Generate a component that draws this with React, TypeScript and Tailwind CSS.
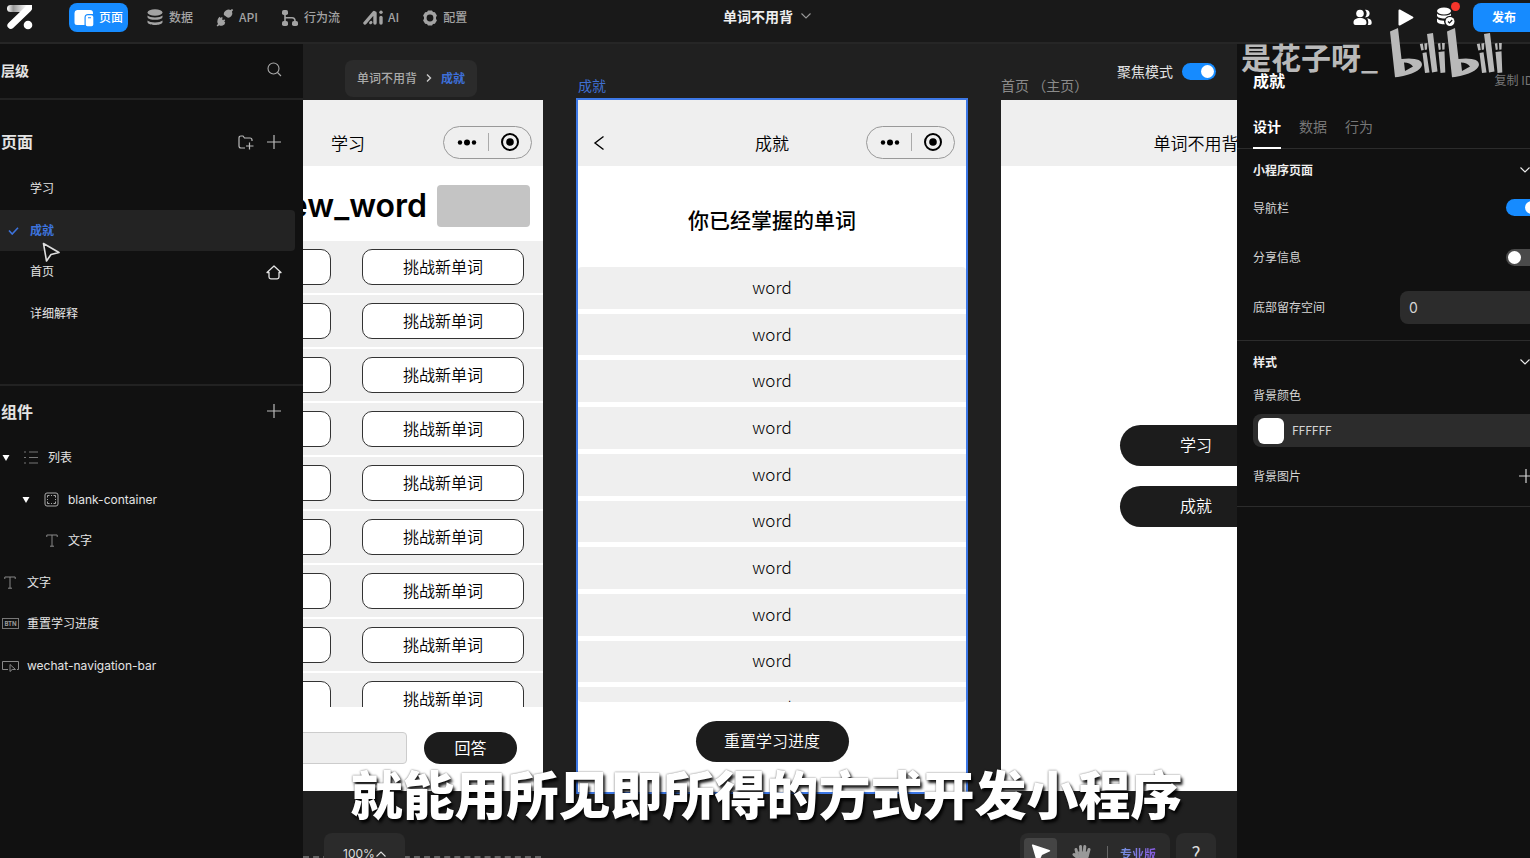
import React from "react";

const cjk = "font-['Noto_Sans_CJK_SC',sans-serif]";

function Switch({ id, on }: { id: string; on: boolean }) {
  return (
    <span className="relative inline-flex h-[17px] w-[34px] shrink-0">
      <input id={id} type="checkbox" role="switch" defaultChecked={on} className="peer h-full w-full appearance-none rounded-full bg-[#4a4a4a] checked:bg-[#168bff]" />
      <span className="pointer-events-none absolute left-[2px] top-[2px] size-[13px] rounded-full bg-white peer-checked:left-[19px]" />
    </span>
  );
}

function Plus() {
  return (
    <svg width="14" height="14" viewBox="0 0 14 14" stroke="currentColor" strokeWidth="1.2" fill="none" aria-hidden="true">
      <path d="M7 0v14M0 7h14" />
    </svg>
  );
}

function Chevron() {
  return (
    <svg width="10" height="6" viewBox="0 0 10 6" fill="none" stroke="currentColor" strokeWidth="1.1" aria-hidden="true">
      <path d="M.5.5 5 5 9.5.5" />
    </svg>
  );
}

function Caret() {
  return (
    <svg width="8" height="6" viewBox="0 0 8 6" fill="white" aria-hidden="true">
      <path d="M.5 0h7L4 6z" />
    </svg>
  );
}

const navIcons = {
  page: (
    <svg width="20" height="18" viewBox="0 0 20 18" fill="white">
      <path d="M3 1h13a3 3 0 0 1 3 3v1h-5a3.500 3.500 0 0 0-3.500 3.500V16H3a2.500 2.500 0 0 1-2.500-2.500V4A3 3 0 0 1 3 1z" />
      <path fillRule="evenodd" d="M13.500 6.200h4a1.800 1.800 0 0 1 1.800 1.800v7.500a1.800 1.800 0 0 1-1.800 1.800h-4a1.800 1.800 0 0 1-1.800-1.800V8a1.800 1.800 0 0 1 1.800-1.800zM14 8.300v1h3v-1z" />
    </svg>
  ),
  data: (
    <svg width="17" height="17" viewBox="0 0 17 17" fill="currentColor">
      <ellipse cx="8" cy="3.500" rx="7.500" ry="3.200" />
      <path d="M.5 6.500c2.500 2.600 12.500 2.600 15 0v1.700c-1 3.500-14 3.500-15 0zM.5 11.500c2.500 2.600 12.500 2.600 15 0v1.700c-1 3.700-14 3.700-15 0z" />
    </svg>
  ),
  api: (
    <svg width="18" height="18" viewBox="0 0 18 18" fill="currentColor">
      <path d="M7.900 6q-.6-3 2-4.600 2.500-1.400 4.700-.4L16 0l1.200 1.100-1.200 1.300q1 2.600-.6 4.600-1.700 2.200-4 1.600z" />
      <path d="m3.600 7.800 1.200 1.200 1-1 1.100 1-1 1.100 1.200 1.200 1-1 1.100 1-1 1.100 1 1q-.3 2.400-2.500 3.200-2 .6-3.600-.4L1.700 17.500.6 16.400 2 14.900q-1.200-2-.4-4.200.7-2 2-2.900z" />
    </svg>
  ),
  flow: (
    <svg width="18" height="18" viewBox="0 0 18 18" fill="currentColor">
      <rect x="1" y="1" width="6" height="5" rx="1.800" />
      <rect x="1" y="12" width="6" height="5" rx="1.800" />
      <rect x="11" y="12" width="6" height="5" rx="1.800" />
      <path d="M4 5v8M4 8.800h7q3 0 3 3v1" fill="none" stroke="currentColor" strokeWidth="1.600" />
    </svg>
  ),
  ai: (
    <svg width="20" height="15" viewBox="0 0 20 15" fill="none" stroke="currentColor" strokeWidth="3.400" strokeLinecap="round">
      <path d="M2 13 11 2.500M12 3v10" />
      <path d="m7.500 12.800.6-.5" strokeWidth="2.800" />
      <path d="M18 7.500V13" />
      <path d="M18 2.200v.1" />
    </svg>
  ),
  config: (
    <svg width="16" height="16" viewBox="0 0 16 16" fill="currentColor">
      <path fillRule="evenodd" d="M6 .5h4l1 1.600 1.900.1 2 3.400-.9 1.600v1.600l.9 1.600-2 3.400-1.900.1-1 1.600H6l-1-1.600-1.900-.1-2-3.400.9-1.600V7.200l-.9-1.600 2-3.400L5 2.100zM8 4.600a3.400 3.400 0 1 0 0 6.800 3.400 3.400 0 0 0 0-6.800z" />
    </svg>
  ),
};

const nav: { icon: React.ReactNode; label: string; active?: boolean }[] = [
  { icon: navIcons.page, label: "页面", active: true },
  { icon: navIcons.data, label: "数据" },
  { icon: navIcons.api, label: "API" },
  { icon: navIcons.flow, label: "行为流" },
  { icon: navIcons.ai, label: "AI" },
  { icon: navIcons.config, label: "配置" },
];

function Header() {
  return (
    <header className="relative flex h-11 shrink-0 items-start justify-between border-b-2 border-[#262626] bg-[#191919]">
      <div className="flex pt-[3px]">
        <svg className="ml-[7px] mt-[1px] shrink-0" width="26" height="26" viewBox="0 0 26 26" aria-label="Logo">
          <defs>
            <linearGradient id="logo" x1="0" x2="1">
              <stop offset="0" stopColor="#fff" />
              <stop offset=".25" stopColor="#999" />
              <stop offset=".8" stopColor="#fff" />
            </linearGradient>
          </defs>
          <path d="M3.500 1H25v3.500L21 8H3.500a3.500 3.500 0 0 1 0-7z" fill="url(#logo)" />
          <path d="M21.500 4.500 3.800 21.500" stroke="white" strokeWidth="6.800" strokeLinecap="round" />
          <circle cx="21" cy="21" r="4.300" fill="white" />
        </svg>
        <nav className="ml-9 flex gap-[3px] text-[12px] font-medium text-[#a3a3a3]">
          {nav.map((n) => (
            <a key={n.label} href="#" className={n.active ? "mr-[6px] flex h-[29px] items-center gap-[5px] rounded-lg bg-[#168bff] px-[5px] text-white" : "flex h-[29px] items-center gap-[5px] px-[10px]"}>
              {n.icon}
              <span className="pb-[2px]">{n.label}</span>
            </a>
          ))}
        </nav>
      </div>
      <button className="absolute left-1/2 top-[6px] flex -translate-x-1/2 items-center gap-2 pl-1 text-[14px] leading-5 font-bold text-[#eee]">
        单词不用背
        <span className="text-[#999]"><Chevron /></span>
      </button>
      <div className="flex items-start pt-[3px] text-white">
        <button aria-label="成员" className="mt-[6px]">
          <svg width="19" height="17" viewBox="0 0 19 17" fill="white">
            <circle cx="7" cy="4.500" r="3.800" />
            <path d="M12 .8a3.800 3.800 0 1 1 0 7.400 5 5 0 0 0 0-7.400zM.5 13.500c0-3 2.500-4.500 6.500-4.500s6.500 1.500 6.500 4.500c0 1.800-.8 2.500-2 2.500h-9c-1.200 0-2-.7-2-2.500zM14 9.300c3 .4 4.700 1.700 4.700 4.200 0 1.800-.8 2.500-2 2.500h-2c1-2 .7-5-.7-6.700z" />
          </svg>
        </button>
        <button aria-label="预览" className="ml-[26px] mt-[6px]">
          <svg width="16" height="17" viewBox="0 0 16 17" fill="white">
            <path d="M.5 1.500C.5.500 1.300.2 2 .6l13 7.200q1 .7 0 1.400l-13 7.200c-.7.400-1.500 0-1.500-1z" />
          </svg>
        </button>
        <button aria-label="数据库状态" className="relative ml-[22px] mt-1">
          <svg width="20" height="20" viewBox="0 0 20 20" fill="white">
            <ellipse cx="8" cy="4" rx="7" ry="3.500" />
            <path d="M1 6.500c2 2.700 12 2.700 14 0v2.300c-3 0-5 1.200-6 2.700-4 .2-7.500-1-8-2.800zM1 11.500c1.500 1.600 4 2.200 7 2.200 0 1.500.3 2.500 1 3.500-4 .3-8-.8-8-3z" />
            <circle cx="14" cy="14.500" r="4.500" />
            <path d="m12 14.500 1.500 1.500 2.700-3" fill="none" stroke="#191919" strokeWidth="1.200" />
          </svg>
          <span className="absolute -top-[5px] left-[15px] size-[9px] rounded-full bg-[#f5352b]" />
        </button>
        <button className="-mr-3 ml-[17px] h-[29px] w-[69px] rounded-lg bg-[#168bff] pr-[7px] pb-[2px] text-[12px] font-bold">发布</button>
      </div>
    </header>
  );
}

function TextIcon() {
  return (
    <svg width="12" height="13" viewBox="0 0 12 13" fill="none" stroke="currentColor" aria-hidden="true">
      <path d="M.8 3V1h10.400v2M6 1v11.200M4 12.200h4" />
    </svg>
  );
}

const pages = [{ name: "学习" }, { name: "成就", active: true }, { name: "首页", home: true }, { name: "详细解释" }];

function LeftPanel() {
  return (
    <aside className="relative z-10 flex w-[303px] shrink-0 flex-col bg-[#111] text-[12px] text-[#e4e4e4]">
      <div className="flex h-[56px] shrink-0 items-center justify-between border-b-2 border-[#222] pr-[21px] pl-[1px]">
        <h2 className="pb-[2px] text-[14px] font-bold">层级</h2>
        <button aria-label="搜索" className="-mt-1 text-[#aaa]">
          <svg width="15" height="15" viewBox="0 0 15 15" fill="none" stroke="currentColor" strokeWidth="1.100">
            <circle cx="6.500" cy="6.500" r="5.500" />
            <path d="m10.500 10.500 3.500 3.500" />
          </svg>
        </button>
      </div>
      <section className="h-[286px] shrink-0 border-b-2 border-[#222] pt-[26px]">
        <div className="flex h-8 items-center justify-between pr-[22px] pl-[1px]">
          <h2 className="pb-[2px] text-[16px] font-bold">页面</h2>
          <div className="flex items-center gap-[13px] text-[#bbb]">
            <button aria-label="新建文件夹">
              <svg width="16" height="15" viewBox="0 0 16 15" fill="none" stroke="currentColor" strokeWidth="1.200">
                <path d="M7 13H3q-2 0-2-2V3q0-2 2-2h2l1.500 2H12q2 0 2 2v1M11.500 7.500v7M8 11h7.500" />
              </svg>
            </button>
            <button aria-label="新建页面"><Plus /></button>
          </div>
        </div>
        <ul className="mt-[10px]">
          {pages.map((p) => (
            <li key={p.name} className="pr-2">
              <a href="#" className={p.active ? "flex h-[41px] items-center rounded-r-[4px] bg-[#232323] pr-[13px] font-bold text-[#3d73dc]" : "flex h-[42px] items-center pr-[13px]"}>
                <span className="flex w-[30px] pl-2">
                  {p.active && (
                    <svg width="11" height="8" viewBox="0 0 11 8" fill="none" stroke="#3d73dc" strokeWidth="1.600"><path d="M1 3.500 4.200 7 10 .8" /></svg>
                  )}
                </span>
                <span className="pb-[2px]">{p.name}</span>
                {p.home && (
                  <svg className="ml-auto" width="16" height="15" viewBox="0 0 16 15" fill="none" stroke="currentColor" strokeWidth="1.300" strokeLinejoin="round">
                    <path d="M1 7.500 8 1l7 6.500h-2V12q0 1.800-1.800 1.800H4.800Q3 13.800 3 12V7.500z" />
                  </svg>
                )}
              </a>
            </li>
          ))}
        </ul>
      </section>
      <section className="pt-[9px]">
        <div className="flex h-8 items-center justify-between pr-[22px] pl-[1px]">
          <h2 className="pb-[1px] text-[16px] font-bold">组件</h2>
          <button aria-label="添加组件" className="text-[#bbb]"><Plus /></button>
        </div>
        <ul className="mt-[10px] font-['Inter','Noto_Sans_CJK_SC',sans-serif] *:flex *:h-[41px] *:items-center">
          <li className="mb-[1px] pl-[2px]">
            <Caret />
            <svg className="mr-[9px] ml-[14px] text-[#777]" width="15" height="13" viewBox="0 0 15 13" stroke="currentColor" fill="none" aria-hidden="true">
              <path d="M0 1h2M5 1h9M0 6.500h2M5 6.500h9M0 12h2M5 12h9" />
            </svg>
            列表
          </li>
          <li className="pl-[22px]">
            <Caret />
            <svg className="mr-[9px] ml-[14px] text-[#aaa]" width="15" height="15" viewBox="0 0 15 15" stroke="currentColor" fill="none" aria-hidden="true">
              <rect x="1" y="1" width="13" height="13" rx="2" />
              <path d="M3.500 5.500v-2h2M9.500 3.500h2v2M11.500 9.500v2h-2M5.500 11.500h-2v-2M7 3.500h1M7 11.500h1M3.500 7v1M11.500 7v1" />
            </svg>
            blank-container
          </li>
          <li className="mb-[1px] pl-[46px]"><span className="mr-[10px] text-[#888]"><TextIcon /></span>文字</li>
          <li className="pl-[4px]"><span className="mr-[11px] text-[#888]"><TextIcon /></span>文字</li>
          <li className="mb-[1px] pl-[2px]">
            <span className="mr-2 flex h-[11px] w-[17px] items-center justify-center border border-[#777] text-[6px] leading-none font-bold text-[#999]">BTN</span>
            重置学习进度
          </li>
          <li className="pl-[2px]">
            <svg className="mr-2 text-[#888]" width="17" height="12" viewBox="0 0 17 12" stroke="currentColor" fill="none" aria-hidden="true">
              <path d="M6 9.500H.5v-8h16v8H15M8 4.500v7l2.200-2h3.300z" />
            </svg>
            wechat-navigation-bar
          </li>
        </ul>
      </section>
    </aside>
  );
}

function Capsule() {
  return (
    <div className="absolute top-[26px] right-[11px] flex h-[33px] w-[89px] items-center rounded-full border border-[#999]">
      <svg className="w-full" height="22" viewBox="0 0 87 22" aria-hidden="true">
        <circle cx="16" cy="10.500" r="2.200" />
        <circle cx="23" cy="10.500" r="3" />
        <circle cx="30" cy="10.500" r="2.200" />
        <path d="M44.500 1v18" stroke="#aaa" />
        <circle cx="66" cy="10" r="8" fill="none" stroke="#000" strokeWidth="2" />
        <circle cx="66" cy="10" r="3.800" />
      </svg>
    </div>
  );
}

function TitleBar({ title, back, capsule }: { title: string; back?: boolean; capsule?: boolean }) {
  return (
    <div className="relative flex h-[66px] shrink-0 items-center justify-center bg-[#efefef] pt-5 text-[17px] font-[350]">
      {back && (
        <svg className="absolute top-[35px] left-[15px]" width="12" height="16" viewBox="0 0 12 16" fill="none" stroke="#000" strokeWidth="1.400" aria-hidden="true">
          <path d="M10.500 1.500 2 8l8.500 6.500" />
        </svg>
      )}
      {title}
      {capsule && <Capsule />}
    </div>
  );
}

const pill = "h-[41px] w-[153px] rounded-full bg-[#1c1c1c] pb-[3px] text-[16px] font-[350] text-white";

function Canvas() {
  return (
    <main className="relative min-w-0 flex-1 overflow-hidden bg-[#202020] pt-[54px] text-black">
      <div className="-ml-[150px] flex w-max gap-[33px]">
        <article className="mt-[2px] flex h-[691px] w-[390px] flex-col bg-white">
          <TitleBar title="学习" capsule />
          <div className="flex h-[75px] shrink-0 items-center justify-end gap-[10px] pt-[4px] pr-[13px]">
            <span className="font-['Inter',sans-serif] text-[32px] font-semibold">new_word</span>
            <span className="h-[42px] w-[93px] rounded-[4px] bg-[#c4c4c4]" />
          </div>
          <div className="flex h-[466px] shrink-0 flex-col gap-[2px] overflow-hidden">
            {Array.from({ length: 9 }, (_, i) => (
              <div key={i} className="flex h-[52px] shrink-0 items-center gap-[31px] bg-[#efefef] pl-4 text-[16px] font-[350]">
                <button aria-label="复习单词" className="h-9 w-[162px] rounded-[10px] border border-[#333] bg-white" />
                <button className="h-9 w-[162px] rounded-[10px] border border-[#333] bg-white pb-[3px]">挑战新单词</button>
              </div>
            ))}
          </div>
          <div className="flex items-center gap-[17px] pt-[25px] pl-4">
            <input aria-label="答案" className="h-8 w-[238px] rounded-[4px] border border-[#ccc] bg-[#efefef]" />
            <button className="h-8 w-[93px] rounded-full bg-[#1c1c1c] pb-[2px] text-[16px] text-white">回答</button>
          </div>
        </article>
        <article className="relative flex h-[696px] w-[392px] flex-col border-2 border-[#3d78e6] bg-white">
          <TitleBar title="成就" back capsule />
          <h3 className="flex h-[101px] shrink-0 items-center justify-center pt-[7px] text-[21px] font-medium">你已经掌握的单词</h3>
          <div className="h-[435px] shrink-0 overflow-hidden rounded-[4px]">
            <ul className="grid h-[462px] grid-rows-10 gap-[5px] text-[17px] leading-5 font-light">
              {Array.from({ length: 10 }, (_, i) => (
                <li key={i} className="flex items-center justify-center bg-[#efefef] pb-[2px]">word</li>
              ))}
            </ul>
          </div>
          <button className={`mx-auto mt-[19px] ${pill}`}>重置学习进度</button>
        </article>
        <article className="mt-[2px] flex h-[691px] w-[390px] flex-col items-stretch bg-white">
          <TitleBar title="单词不用背" />
          <div className="flex flex-col items-center gap-5 pt-[259px]">
            <button className={pill}>学习</button>
            <button className={pill}>成就</button>
          </div>
        </article>
      </div>
      <span className="absolute top-[31px] left-[275px] text-[14px] leading-5 text-[#3f6fd0]">成就</span>
      <span className="absolute top-[31px] left-[698px] text-[14px] leading-5 text-[#8b8b8b]">首页 （主页）</span>
      <nav aria-label="路径" className="absolute top-[16px] left-[42px] flex h-[37px] items-center gap-[9px] rounded-lg bg-[#2b2b2b] px-3 pb-[1px] text-[12px] font-medium text-[#aaa]">
        <a href="#">单词不用背</a>
        <svg width="6" height="8" viewBox="0 0 6 8" fill="none" stroke="#ccc" strokeWidth="1.400"><path d="m1 .5 3.500 3.500L1 7.500" /></svg>
        <a href="#" className="font-bold text-[#3d6fd8]">成就</a>
      </nav>
      <label htmlFor="focus" className="absolute top-[17px] right-[21px] flex items-center gap-[9px] text-[14px] leading-5 text-[#e4e4e4]">
        聚焦模式
        <Switch id="focus" on />
      </label>
      <div className="absolute bottom-0 left-0 w-[238px] border-t-2 border-dashed border-[#666]" />
      <button className="absolute -bottom-[17px] left-[21px] flex h-[42px] w-[81px] items-center justify-center gap-[1px] rounded-lg bg-[#2b2b2b] font-['Inter',sans-serif] text-[12px] text-[#ddd]">
        100%
        <span className="rotate-180"><Chevron /></span>
      </button>
      <div className="absolute right-[21px] -bottom-[17px] flex h-[42px] gap-[6px]">
        <div className="flex w-[150px] items-center rounded-lg bg-[#2b2b2b] px-1">
          <button aria-label="选择" className="flex h-8 w-[33px] items-center justify-center rounded bg-[#444]">
            <svg width="20" height="20" viewBox="0 0 20 20" fill="white"><path d="M1 1.500q-.5-1.500 1-1L18.500 6q1.500.8 0 1.600L11 11l-3.500 7.500Q6.500 20 6 18.500z" /></svg>
          </button>
          <button aria-label="拖动" className="ml-[15px]">
            <svg width="20" height="20" viewBox="0 0 20 20" stroke="#999" strokeWidth="3" strokeLinecap="round" fill="#999">
              <path d="M6 14 4 5.500M9 11 8.500 2.500M12 11l.8-8.500M15 13l2-7.500M6 14l-4-3.500" fill="none" />
              <path d="M6 8h9l1 4-3 6H8z" strokeWidth="1" />
            </svg>
          </button>
          <span className="ml-[15px] h-4 w-px bg-[#666]" />
          <span className="ml-3 bg-linear-to-r from-[#7193e0] to-[#8658dd] bg-clip-text text-[12px] font-bold text-transparent">专业版</span>
        </div>
        <button className="w-10 rounded-lg bg-[#2b2b2b] pb-[2px] text-[19px] text-[#ddd]">?</button>
      </div>
    </main>
  );
}

function RightPanel() {
  return (
    <aside className="relative z-10 w-[293px] shrink-0 overflow-hidden bg-[#111] text-[12px] text-[#d5d5d5]">
      <div className="-mr-[12px]">
        <div className="flex h-[74px] items-center justify-between pr-[9px] pb-[2px] pl-4">
          <h2 className="text-[16px] font-bold text-white">成就</h2>
          <button className="text-[#777]">复制 ID</button>
        </div>
        <div className="flex h-[31px] gap-[18px] border-b border-[#2c2c2c] pl-4 text-[14px] text-[#777] *:h-[31px] *:pb-[20px] *:leading-4">
          <button className="border-b-2 border-white font-bold text-white">设计</button>
          <button>数据</button>
          <button>行为</button>
        </div>
        <section className="border-b border-[#2c2c2c] pb-4 pl-4">
          <h3 className="flex h-[42px] items-center justify-between pr-3 font-bold text-[#eee]">小程序页面<Chevron /></h3>
          <div className="flex h-[33px] items-center justify-between"><label htmlFor="navbar">导航栏</label><span className="mr-[2px] flex"><Switch id="navbar" on /></span></div>
          <div className="mt-[17px] flex h-[33px] items-center justify-between"><label htmlFor="share" className="pb-[1px]">分享信息</label><span className="mr-[2px] flex"><Switch id="share" on={false} /></span></div>
          <div className="mt-[17px] flex h-[33px] items-center justify-between">
            <label htmlFor="space" className="pb-[1px]">底部留存空间</label>
            <input id="space" defaultValue="0" className="h-[33px] w-[142px] rounded-lg bg-[#2c2c2c] px-[9px] pb-[1px] font-['Inter',sans-serif] text-[14px]" />
          </div>
        </section>
        <section className="border-b border-[#2c2c2c] pb-[14px] pl-4">
          <h3 className="flex h-[41px] items-center justify-between pr-3 font-bold text-[#eee]">样式<Chevron /></h3>
          <label htmlFor="color" className="flex h-[27px] items-center pb-[1px]">背景颜色</label>
          <div className="mt-[5px] flex h-[33px] items-center gap-[8px] rounded-lg bg-[#2c2c2c] px-[5px]">
            <span className="size-[26px] rounded-md bg-white" />
            <input id="color" defaultValue="FFFFFF" className="min-w-0 flex-1 pb-[2px]" />
          </div>
          <div className="mt-3 flex h-[33px] items-center justify-between pr-[9px]">背景图片<button aria-label="添加背景图片"><Plus /></button></div>
        </section>
      </div>
    </aside>
  );
}

function Watermark() {
  return (
    <div className="pointer-events-none absolute top-[28px] right-[27px] z-20 flex items-start gap-3 text-[#b9b9b9]">
      <span className="mt-[8px] text-[30px] leading-10 font-bold">是花子呀_</span>
      <svg width="113" height="50" viewBox="0 0 113 50" fill="currentColor" aria-label="bilibili">
        <g id="half">
          <path fillRule="evenodd" d="M0 3.500 8 0l3.500 31Q32 29 32 37q-2 8-24 12l-3 .2zM14 34.500l1 8.500 8-4.500q-3-4-9-4z" />
          <path d="m32.500 25 4-.8 3 20.300-4.500.5zM37 6l6-1 4.500 38.500-5.500 1zM48.500 24l6-.8.8 21.300-4.800.5z" />
          <path d="m29.800 16 3-.4 1 6.400-2.500.6zM34.300 15.500l3-.5-.3 6.500-2.200.4zM47.800 15.500l2.500-.5.5 6.500-2 .4zM52 15h2.800l-.3 6.500-2.200.2z" />
        </g>
        <use href="#half" x="57" />
      </svg>
    </div>
  );
}

export default function App() {
  return (
    <div lang="zh-CN" className={`relative flex h-screen flex-col overflow-hidden bg-[#111] ${cjk}`}>
      <Header />
      <div className="flex min-h-0 flex-1">
        <LeftPanel />
        <Canvas />
        <RightPanel />
      </div>
      <Watermark />
      <svg className="pointer-events-none absolute top-[242px] left-[42px] z-20" width="19" height="21" viewBox="0 0 19 21" fill="#111" stroke="#ddd" strokeWidth="1.600" strokeLinejoin="round" aria-hidden="true">
        <path d="m1.500 1.500 15.500 9-8 2L4.500 19z" />
      </svg>
      <p className="pointer-events-none absolute inset-x-0 bottom-[35px] z-20 pl-[3px] text-center text-[52px] leading-[60px] font-black text-white [text-shadow:2px_3px_3px_rgba(0,0,0,.9),0_0_2px_rgba(0,0,0,.6)]">
        就能用所见即所得的方式开发小程序
      </p>
    </div>
  );
}
